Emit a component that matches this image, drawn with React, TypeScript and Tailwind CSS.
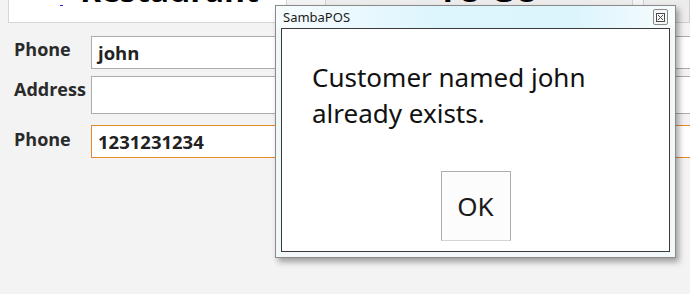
import React from "react";

function CloseIcon() {
  return (
    <svg width="9" height="9" viewBox="0 0 9 9" fill="none" stroke="#4a4a4a" strokeWidth="1">
      <rect x="0.5" y="0.5" width="8" height="8" />
      <path d="M2 2 L7 7 M7 2 L2 7" />
    </svg>
  );
}

export default function App() {
  return (
    <div className="relative w-[690px] h-[294px] bg-[#f3f3f3] overflow-hidden font-['Open_Sans',sans-serif]">
      {/* header row */}
      <div className="flex h-[23px]">
        <div className="shrink-0 ml-[8px] w-[279px] h-[23px] bg-white border border-t-0 border-[#d6d6d6] relative overflow-hidden flex">
          <span className="mt-[5px] ml-[51px] w-[3px] h-[1px] bg-[#2020e0]" />
          <span className="-mt-[26px] ml-[17px] text-[32px] leading-none font-bold text-black">Restaurant</span>
        </div>
        <div className="shrink-0 ml-[38px] w-[308px] h-[23px] bg-[#ececec] border border-t-0 border-[#cfcfcf] overflow-hidden flex justify-center">
          <span className="-mt-[26px] ml-[20px] text-[32px] leading-none font-bold text-black">TO GO</span>
        </div>
        <div className="ml-[10px] flex-1 h-[23px] bg-[#ececec] border border-t-0 border-[#cfcfcf]" />
      </div>

      {/* form */}
      <div className="mt-[13px] flex flex-col">
        <div className="flex h-[33px]">
          <div className="shrink-0 w-[91px] pl-[14px] pt-[3px] text-[18px] leading-[20px] font-bold text-[#2a2a2a]">Phone</div>
          <div className="shrink-0 w-[620px] border border-[#acacac] bg-white flex items-center pl-[6px] text-[18.5px] font-bold text-[#222]">john</div>
        </div>
        <div className="flex h-[38px] mt-[7px]">
          <div className="shrink-0 w-[91px] pl-[14px] pt-[3px] text-[18px] leading-[20px] font-bold text-[#2a2a2a]">Address</div>
          <div className="shrink-0 w-[620px] border border-[#acacac] bg-white" />
        </div>
        <div className="flex h-[33px] mt-[11px]">
          <div className="shrink-0 w-[91px] pl-[14px] pt-[4px] text-[18px] leading-[20px] font-bold text-[#2a2a2a]">Phone</div>
          <div className="shrink-0 w-[620px] border border-[#e8892a] bg-white flex items-center pl-[6px] text-[18.5px] font-bold text-[#222]">1231231234</div>
        </div>
      </div>

      {/* dialog window */}
      <div className="absolute left-[275px] top-[5px] w-[401px] h-[253px] border border-[#8a8a8a] bg-[#f2f7f9] shadow-[3px_4px_6px_rgba(0,0,0,0.35)] flex flex-col px-[5px] pb-[5px]">
        <div className="h-[22px] -mx-[5px] px-[7px] flex items-center justify-between bg-[linear-gradient(90deg,#f7fcfe_0%,#ddf5fd_40%,#dcf5fd_75%,#f8fcfd_100%)]">
          <span className="text-[13px] leading-none text-[#1a1a1a] font-['Noto_Sans',sans-serif]">SambaPOS</span>
          <div className="w-[15px] h-[16px] border border-[#8a8a8a] rounded-[2px] bg-[#f7f7f7] flex items-center justify-center">
            <CloseIcon />
          </div>
        </div>
        <div className="flex-1 border border-[#3a3a3a] bg-white flex flex-col">
          <div className="pl-[30px] pt-[30px] text-[26px] leading-[36px] text-[#111] font-['Noto_Sans',sans-serif]">
            <div>Customer named john</div>
            <div>already exists.</div>
          </div>
          <div className="flex justify-center mt-[40px]">
            <div className="w-[70px] h-[70px] border border-[#adadad] border-b-[#d4d4d4] bg-[#fcfcfc] flex items-center justify-center text-[26px] text-[#1a1a1a] font-['Noto_Sans',sans-serif]">
              OK
            </div>
          </div>
        </div>
      </div>
    </div>
  );
}
